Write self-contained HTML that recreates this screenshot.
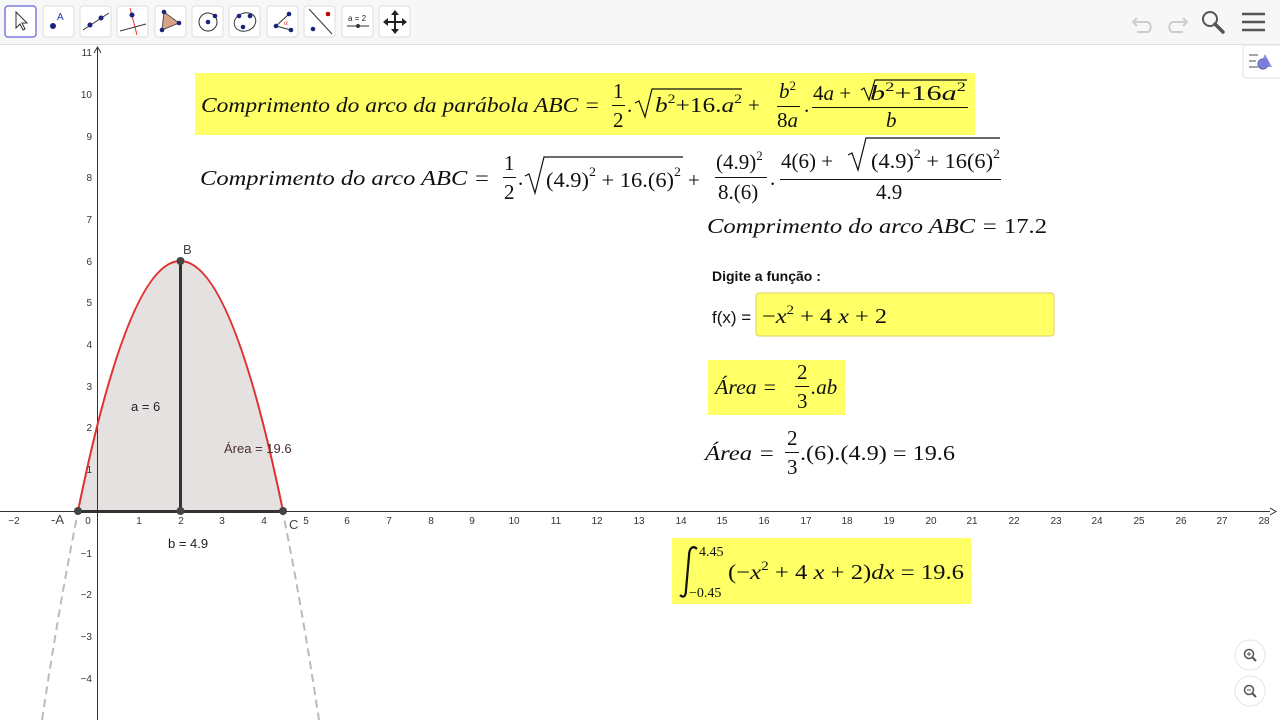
<!DOCTYPE html>
<html><head><meta charset="utf-8"><style>
body{margin:0;width:1280px;height:720px;overflow:hidden;background:#fff}
svg{display:block}
.s{font-family:"Liberation Serif",serif;font-style:italic;font-size:21px;fill:#111}
.n{font-family:"Liberation Serif",serif;font-size:21px;fill:#111}
.i{font-style:italic}
.r{font-style:normal}
.sup{font-size:13px;font-style:normal}
.ax{font-family:"Liberation Sans",sans-serif;font-size:10px;fill:#333}
.l{font-family:"Liberation Sans",sans-serif;font-size:13px;fill:#222}
</style></head><body>
<svg width="1280" height="720" viewBox="0 0 1280 720">
<!-- toolbar -->
<rect x="0" y="0" width="1280" height="44" fill="#f7f7f7"/>
<line x1="0" y1="44.5" x2="1280" y2="44.5" stroke="#ddd"/>
<g fill="#fff" stroke="#ddd">
<rect x="5" y="6" width="31" height="31" rx="3" stroke="#7b7be0" stroke-width="1.5"/>
<rect x="43" y="6" width="31" height="31" rx="3"/>
<rect x="80" y="6" width="31" height="31" rx="3"/>
<rect x="117" y="6" width="31" height="31" rx="3"/>
<rect x="155" y="6" width="31" height="31" rx="3"/>
<rect x="192" y="6" width="31" height="31" rx="3"/>
<rect x="229" y="6" width="31" height="31" rx="3"/>
<rect x="267" y="6" width="31" height="31" rx="3"/>
<rect x="304" y="6" width="31" height="31" rx="3"/>
<rect x="342" y="6" width="31" height="31" rx="3"/>
<rect x="379" y="6" width="31" height="31" rx="3"/>
</g>
<path d="M16 12 L16 28 L20 24 L23 30 L25 29 L22 23 L27 23 Z" fill="#fff" stroke="#333"/>
<circle cx="53" cy="26" r="3" fill="#1a237e"/><text x="57" y="20" font-family="Liberation Sans" font-size="10" fill="#2233aa">A</text>
<line x1="83" y1="30" x2="109" y2="13" stroke="#333"/><circle cx="90" cy="25" r="2.5" fill="#1a237e"/><circle cx="101" cy="18" r="2.5" fill="#1a237e"/>
<line x1="130" y1="8" x2="137" y2="35" stroke="#e33"/><line x1="120" y1="31" x2="146" y2="24" stroke="#333"/><circle cx="132" cy="15" r="2.5" fill="#1a237e"/>
<path d="M164 12 L179 23 L162 30 Z" fill="#d9a38a" stroke="#555"/><circle cx="164" cy="12" r="2.3" fill="#1a237e"/><circle cx="179" cy="23" r="2.3" fill="#1a237e"/><circle cx="162" cy="30" r="2.3" fill="#1a237e"/>
<circle cx="208" cy="22" r="9" fill="none" stroke="#333"/><circle cx="208" cy="22" r="2.3" fill="#1a237e"/><circle cx="215" cy="16" r="2.3" fill="#1a237e"/>
<ellipse cx="245" cy="22" rx="11" ry="9" fill="none" stroke="#333" transform="rotate(-20 245 22)"/><circle cx="239" cy="16" r="2.3" fill="#1a237e"/><circle cx="250" cy="16" r="2.3" fill="#1a237e"/><circle cx="243" cy="27" r="2.3" fill="#1a237e"/>
<path d="M289 14 L276 26 L291 30" fill="none" stroke="#333"/><text x="284" y="25" font-size="7" fill="#e33">α</text><circle cx="276" cy="26" r="2.3" fill="#1a237e"/><circle cx="289" cy="14" r="2.3" fill="#1a237e"/><circle cx="291" cy="30" r="2.3" fill="#1a237e"/>
<line x1="309" y1="9" x2="332" y2="34" stroke="#333"/><circle cx="313" cy="29" r="2.3" fill="#1a237e"/><circle cx="328" cy="14" r="2.3" fill="#b00"/>
<text x="348" y="21" font-family="Liberation Sans" font-size="8" fill="#222">a = 2</text><line x1="347" y1="26" x2="369" y2="26" stroke="#333"/><circle cx="358" cy="26" r="2" fill="#333"/>
<path d="M395 12 L395 32 M385 22 L405 22" stroke="#222" stroke-width="2"/><path d="M395 10 L391 15 L399 15 Z M395 34 L391 29 L399 29 Z M383 22 L388 18 L388 26 Z M407 22 L402 18 L402 26 Z" fill="#222"/>
<!-- right toolbar -->
<path d="M1137 18 L1133 22 L1137 26 M1133 22 L1148 22 A6 6 0 0 1 1148 32 L1137 32" fill="none" stroke="#ccc" stroke-width="2"/>
<path d="M1183 18 L1187 22 L1183 26 M1187 22 L1172 22 A6 6 0 0 0 1172 32 L1183 32" fill="none" stroke="#ccc" stroke-width="2"/>
<circle cx="1210" cy="19" r="7" fill="none" stroke="#555" stroke-width="2"/><line x1="1215" y1="24" x2="1223" y2="32" stroke="#555" stroke-width="3.5" stroke-linecap="round"/>
<path d="M1242 14 H1265 M1242 22 H1265 M1242 30 H1265" stroke="#555" stroke-width="2.5"/>
<rect x="1243" y="45" width="40" height="33" rx="3" fill="#fff" stroke="#e3e3e3"/>
<path d="M1249 55 H1258 M1249 61 H1256 M1249 67 H1258" stroke="#888" stroke-width="1.5"/>
<circle cx="1263" cy="64" r="5" fill="#8a8ae0" stroke="#5555aa"/><path d="M1265 54 L1272 67 L1259 67 Z" fill="#7777dd" opacity=".8"/>

<!-- graph -->
<path d="M42 720 Q180 -198 319 720" fill="none" stroke="#bbb" stroke-width="2" stroke-dasharray="8,5"/>
<path d="M78 511 Q180 11 283 511 Z" fill="#e6e1e1"/>
<line x1="0" y1="511.5" x2="1270" y2="511.5" stroke="#333"/>
<path d="M1270 508 L1276 511.5 L1270 515" fill="none" stroke="#333"/>
<line x1="97.5" y1="48" x2="97.5" y2="720" stroke="#333"/>
<path d="M94 53 L97.5 47 L101 53" fill="none" stroke="#333"/>
<g stroke="#333">
<line x1="78" y1="511.5" x2="283" y2="511.5" stroke-width="3"/>
<line x1="180.5" y1="261" x2="180.5" y2="511" stroke-width="3"/>
</g>
<path d="M78 511 Q180 11 283 511" fill="none" stroke="#e03030" stroke-width="2"/>
<g fill="#444"><circle cx="78" cy="511" r="4"/><circle cx="180.5" cy="261" r="4"/><circle cx="283" cy="511" r="4"/><circle cx="180.5" cy="511" r="4"/></g>
<g class="ax" text-anchor="middle">
<text x="14" y="524">−2</text><text x="88" y="524">0</text><text x="139" y="524">1</text><text x="181" y="524">2</text><text x="222" y="524">3</text><text x="264" y="524">4</text><text x="306" y="524">5</text>
<text x="347" y="524">6</text><text x="389" y="524">7</text><text x="431" y="524">8</text><text x="472" y="524">9</text><text x="514" y="524">10</text><text x="556" y="524">11</text><text x="597" y="524">12</text><text x="639" y="524">13</text><text x="681" y="524">14</text><text x="722" y="524">15</text><text x="764" y="524">16</text><text x="806" y="524">17</text><text x="847" y="524">18</text><text x="889" y="524">19</text><text x="931" y="524">20</text><text x="972" y="524">21</text><text x="1014" y="524">22</text><text x="1056" y="524">23</text><text x="1097" y="524">24</text><text x="1139" y="524">25</text><text x="1181" y="524">26</text><text x="1222" y="524">27</text><text x="1264" y="524">28</text>
</g>
<g class="ax" text-anchor="end">
<text x="92" y="56">11</text><text x="92" y="98">10</text><text x="92" y="140">9</text><text x="92" y="181">8</text><text x="92" y="223">7</text><text x="92" y="265">6</text><text x="92" y="306">5</text><text x="92" y="348">4</text><text x="92" y="390">3</text><text x="92" y="431">2</text><text x="92" y="473">1</text>
<text x="92" y="557">−1</text><text x="92" y="598">−2</text><text x="92" y="640">−3</text><text x="92" y="682">−4</text>
</g>
<text class="l" x="131" y="411">a = 6</text>
<text class="l" x="224" y="453" style="fill:#4a2f2f">Área = 19.6</text>
<text class="l" x="168" y="548">b = 4.9</text>
<text class="l" x="183" y="254" style="fill:#444">B</text>
<text class="l" x="51" y="524" style="fill:#444">-A</text>
<text class="l" x="289" y="529" style="fill:#444">C</text>

<!-- formula 1 -->
<rect x="195" y="73" width="780" height="62" fill="#ffff66"/>
<text class="s" x="201" y="112" textLength="399" lengthAdjust="spacingAndGlyphs">Comprimento do arco da parábola ABC =</text>
<text class="n" x="613" y="98">1</text><line x1="612" y1="105.5" x2="625" y2="105.5" stroke="#111"/><text class="n" x="613" y="127">2</text>
<text class="n" x="627" y="112">.</text>
<path d="M635 103 L639 101 L645 117 L652 89 L742 89" fill="none" stroke="#111" stroke-width="1.2"/>
<text class="n" x="655" y="112" textLength="87" lengthAdjust="spacingAndGlyphs"><tspan class="i">b</tspan><tspan class="sup" dy="-9">2</tspan><tspan dy="9">+16.</tspan><tspan class="i">a</tspan><tspan class="sup" dy="-9">2</tspan></text>
<text class="n" x="748" y="112">+</text>
<text class="n" x="779" y="98"><tspan class="i">b</tspan><tspan class="sup" dy="-8">2</tspan></text><line x1="777" y1="106.5" x2="800" y2="106.5" stroke="#111"/><text class="n" x="777" y="127">8<tspan class="i">a</tspan></text>
<text class="n" x="804" y="112">.</text>
<text class="n" x="813" y="100">4<tspan class="i">a</tspan> +</text>
<path d="M861 90 L864 88 L869 100 L875 80 L967 80" fill="none" stroke="#111" stroke-width="1.2"/>
<text class="n" x="870" y="100" textLength="96" lengthAdjust="spacingAndGlyphs"><tspan class="i">b</tspan><tspan class="sup" dy="-9">2</tspan><tspan dy="9">+16</tspan><tspan class="i">a</tspan><tspan class="sup" dy="-9">2</tspan></text>
<line x1="812" y1="107.5" x2="968" y2="107.5" stroke="#111"/>
<text class="s" x="886" y="127">b</text>

<!-- formula 2 -->
<text class="s" x="200" y="185" textLength="290" lengthAdjust="spacingAndGlyphs">Comprimento do arco  ABC =</text>
<text class="n" x="504" y="170">1</text><line x1="503" y1="177.5" x2="516" y2="177.5" stroke="#111"/><text class="n" x="504" y="199">2</text>
<text class="n" x="518" y="185">.</text>
<path d="M525 176 L529 174 L535 193 L544 157 L683 157" fill="none" stroke="#111" stroke-width="1.2"/>
<text class="n" x="546" y="187" textLength="135" lengthAdjust="spacingAndGlyphs">(4.9)<tspan class="sup" dy="-11">2</tspan><tspan dy="11"> + 16.(6)</tspan><tspan class="sup" dy="-11">2</tspan></text>
<text class="n" x="688" y="187">+</text>
<text class="n" x="716" y="169">(4.9)<tspan class="sup" dy="-9">2</tspan></text><line x1="715" y1="177.5" x2="767" y2="177.5" stroke="#111"/><text class="n" x="718" y="199">8.(6)</text>
<text class="n" x="770" y="185">.</text>
<text class="n" x="781" y="168">4(6) +</text>
<path d="M848 155 L852 153 L858 170 L866 138 L1000 138" fill="none" stroke="#111" stroke-width="1.2"/>
<text class="n" x="871" y="168" textLength="129" lengthAdjust="spacingAndGlyphs">(4.9)<tspan class="sup" dy="-10">2</tspan><tspan dy="10"> + 16(6)</tspan><tspan class="sup" dy="-10">2</tspan></text>
<line x1="780" y1="179.5" x2="1001" y2="179.5" stroke="#111"/>
<text class="n" x="876" y="199">4.9</text>

<text class="s" x="707" y="233" textLength="340" lengthAdjust="spacingAndGlyphs">Comprimento do arco  ABC = <tspan class="r"> 17.2</tspan></text>

<text x="712" y="281" font-family="Liberation Sans" font-weight="bold" font-size="14" fill="#111">Digite a função :</text>
<text x="712" y="323" font-family="Liberation Sans" font-size="17" fill="#111">f(x) =</text>
<rect x="756" y="293" width="298" height="43" rx="3" fill="#ffff66" stroke="#ddd060"/>
<text class="n" x="762" y="323" textLength="125" lengthAdjust="spacingAndGlyphs">−<tspan class="i">x</tspan><tspan class="sup" dy="-9">2</tspan><tspan dy="9"> + 4 </tspan><tspan class="i">x</tspan> + 2</text>

<rect x="708" y="360" width="137" height="55" fill="#ffff66"/>
<text class="s" x="715" y="394" textLength="62" lengthAdjust="spacingAndGlyphs">Área =</text>
<text class="n" x="797" y="379">2</text><line x1="795" y1="386.5" x2="809" y2="386.5" stroke="#111"/><text class="n" x="797" y="408">3</text>
<text class="s" x="811" y="394">.ab</text>

<text class="s" x="705" y="460" textLength="70" lengthAdjust="spacingAndGlyphs">Área =</text>
<text class="n" x="787" y="445">2</text><line x1="785" y1="452.5" x2="799" y2="452.5" stroke="#111"/><text class="n" x="787" y="474">3</text>
<text class="n" x="800" y="460" textLength="155" lengthAdjust="spacingAndGlyphs">.(6).(4.9) =  19.6</text>

<rect x="672" y="538" width="299" height="66" fill="#ffff66"/>
<path d="M697 549 C693 545 689 548 689 556 L686 590 C686 597 683 598 680 595" fill="none" stroke="#111" stroke-width="2.2"/>
<text class="n" x="699" y="556" style="font-size:14px">4.45</text>
<text class="n" x="689" y="597" style="font-size:14px">−0.45</text>
<text class="n" x="728" y="579" textLength="236" lengthAdjust="spacingAndGlyphs">(−<tspan class="i">x</tspan><tspan class="sup" dy="-9">2</tspan><tspan dy="9"> + 4 </tspan><tspan class="i">x</tspan> + 2)<tspan class="i">dx</tspan> =  19.6</text>

<!-- zoom buttons -->
<circle cx="1250" cy="655" r="15" fill="#fff" stroke="#e5e5e5"/>
<circle cx="1249" cy="654" r="4.5" fill="none" stroke="#555" stroke-width="1.5"/><line x1="1252" y1="657" x2="1256" y2="661" stroke="#555" stroke-width="2"/><path d="M1247 654 H1251 M1249 652 V656" stroke="#555"/>
<circle cx="1250" cy="691" r="15" fill="#fff" stroke="#e5e5e5"/>
<circle cx="1249" cy="690" r="4.5" fill="none" stroke="#555" stroke-width="1.5"/><line x1="1252" y1="693" x2="1256" y2="697" stroke="#555" stroke-width="2"/><path d="M1247 690 H1251" stroke="#555"/>
</svg>
</body></html>
